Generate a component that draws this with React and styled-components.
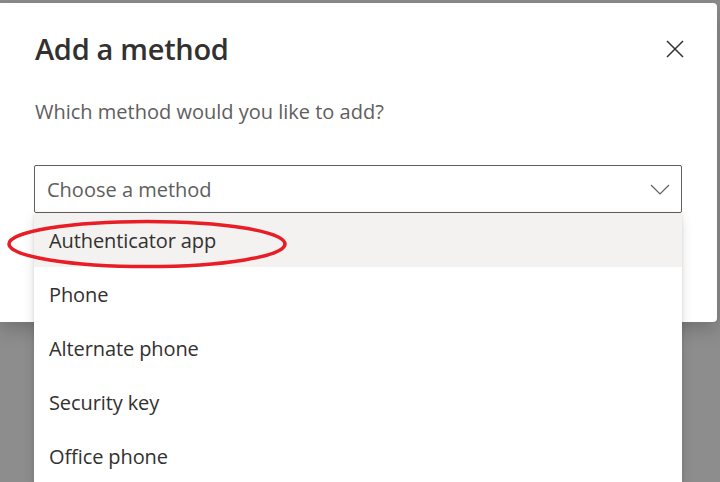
import styled, { createGlobalStyle } from "styled-components";

const GlobalStyle = createGlobalStyle`
  html, body {
    margin: 0;
    padding: 0;
    height: 100%;
    overflow: hidden;
    background: #8d8d8d;
  }
  * { box-sizing: border-box; }
`;

const methods = [
  "Authenticator app",
  "Phone",
  "Alternate phone",
  "Security key",
  "Office phone",
];

export default function App() {
  return (
    <>
      <GlobalStyle />
      <Page>
        <Dialog>
          <Header>
            <Title>Add a method</Title>
            <CloseButton aria-label="Close">
              <svg width="18" height="18" viewBox="0 0 18 18">
                <path d="M1 1 L17 17 M17 1 L1 17" stroke="#323130" strokeWidth="1.5" fill="none" />
              </svg>
            </CloseButton>
          </Header>

          <Subtitle>Which method would you like to add?</Subtitle>

          <Dropdown>
            <Select>
              <Placeholder>Choose a method</Placeholder>
              <svg width="20" height="11" viewBox="0 0 20 11">
                <path d="M1 1 L10 10 L19 1" stroke="#605e5c" strokeWidth="1.2" fill="none" />
              </svg>
            </Select>

            <Options>
              {methods.map((m, i) => (
                <Option key={m} $active={i === 0}>{m}</Option>
              ))}
            </Options>
          </Dropdown>

          <Highlight width="290" height="54" viewBox="0 0 290 54">
            <ellipse cx="140" cy="25" rx="138" ry="22.5" fill="none" stroke="#e81d25" strokeWidth="3.5" />
          </Highlight>
        </Dialog>
      </Page>
    </>
  );
}

const Page = styled.div`
  padding: 3px 3px 0 0;
  font-family: "Segoe UI", "Open Sans", "Noto Sans", sans-serif;
`;

const Dialog = styled.div`
  position: relative;
  height: 319px;
  background: #fff;
  border-radius: 0 4px 4px 0;
  padding: 0 35px 0 34px;
  box-shadow: 0 6px 20px rgba(0, 0, 0, 0.22);
`;

const Header = styled.div`
  display: flex;
  align-items: center;
  justify-content: space-between;
  padding-top: 22px;
  height: 69px;
`;

const Title = styled.h1`
  margin: 0 0 0 1px;
  font-size: 29px;
  font-weight: 600;
  color: #323130;
  letter-spacing: -0.3px;
`;

const CloseButton = styled.button`
  border: none;
  background: none;
  padding: 0;
  margin-right: -2px;
  display: flex;
  cursor: pointer;
`;

const Subtitle = styled.p`
  margin: 26px 0 0 1px;
  font-size: 20px;
  color: #605e5c;
  letter-spacing: 0;
  line-height: 28px;
`;

const Dropdown = styled.div`
  position: relative;
  margin-top: 39px;
`;

const Select = styled.div`
  height: 48px;
  border: 1px solid #605e5c;
  border-radius: 2px;
  display: flex;
  align-items: center;
  justify-content: space-between;
  padding: 0 11px 0 12px;
`;

const Placeholder = styled.span`
  font-size: 20px;
  color: #605e5c;
  letter-spacing: 0;
`;

const Options = styled.div`
  position: absolute;
  top: 100%;
  left: 0;
  right: 0;
  background: #fff;
  box-shadow: 0 5px 11px rgba(0, 0, 0, 0.13), 0 1px 3px rgba(0, 0, 0, 0.11);
  z-index: 2;
`;

const Option = styled.div`
  height: 54px;
  display: flex;
  align-items: center;
  padding-left: 15px;
  font-size: 20px;
  color: #323130;
  letter-spacing: -0.1px;
  background: ${(p) => (p.$active ? "#f3f2f1" : "#fff")};
`;

const Highlight = styled.svg`
  position: absolute;
  left: 7px;
  top: 216px;
  z-index: 3;
`;
